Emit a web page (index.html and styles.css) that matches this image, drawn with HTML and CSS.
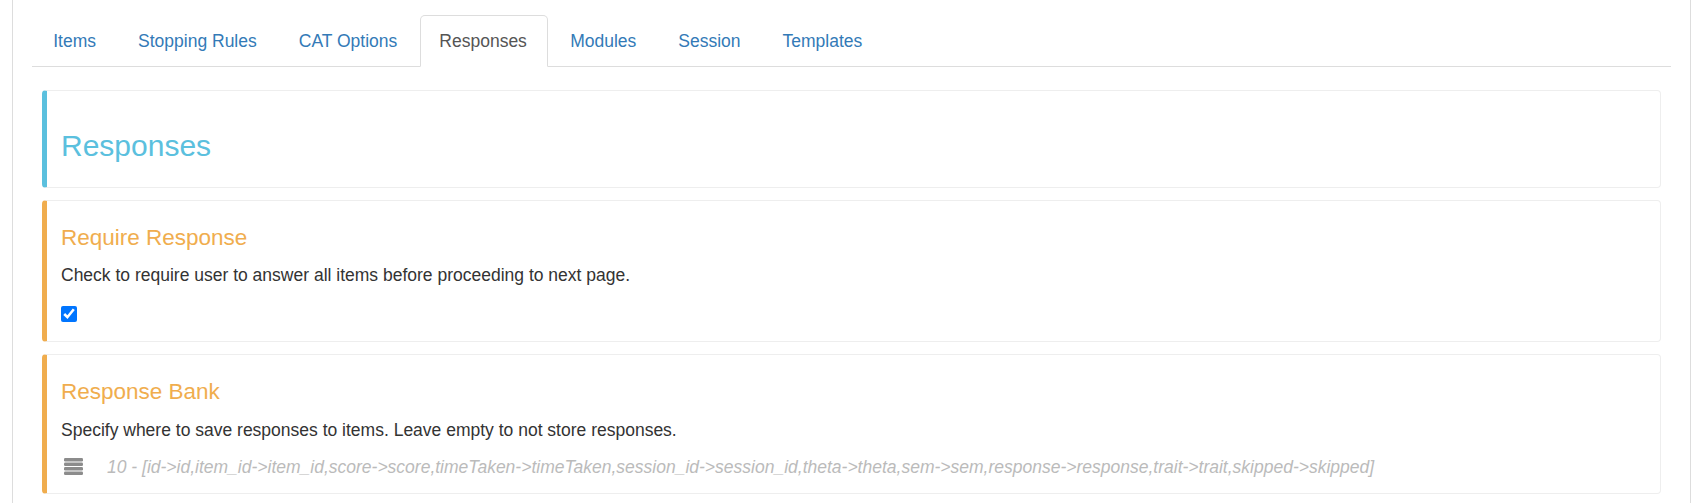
FILE: index.html
```html
<!DOCTYPE html>
<html lang="en">
<head>
<meta charset="utf-8">
<title>Responses</title>
<link rel="stylesheet" href="styles.css">
</head>
<body>
<div class="page">
  <ul class="tabs">
    <li class="tab"><a href="#">Items</a></li>
    <li class="tab"><a href="#">Stopping Rules</a></li>
    <li class="tab"><a href="#">CAT Options</a></li>
    <li class="tab active"><a href="#">Responses</a></li>
    <li class="tab"><a href="#">Modules</a></li>
    <li class="tab"><a href="#">Session</a></li>
    <li class="tab"><a href="#">Templates</a></li>
  </ul>
  <div class="tab-content">
    <div class="callout callout-info">
      <h3 class="callout-title">Responses</h3>
    </div>
    <div class="callout callout-warning">
      <h4 class="section-title">Require Response</h4>
      <p class="section-desc">Check to require user to answer all items before proceeding to next page.</p>
      <div class="check-row"><input type="checkbox" class="check" checked></div>
    </div>
    <div class="callout callout-warning">
      <h4 class="section-title">Response Bank</h4>
      <p class="section-desc">Specify where to save responses to items. Leave empty to not store responses.</p>
      <div class="bank-row">
        <svg class="bank-icon" width="19" height="17" viewBox="0 0 19 17" aria-hidden="true">
          <rect x="0" y="0" width="19" height="3.4" rx="1.2"/>
          <rect x="0" y="4.5" width="19" height="3.4" rx="1.2"/>
          <rect x="0" y="9" width="19" height="3.4" rx="1.2"/>
          <rect x="0" y="13.5" width="19" height="3.4" rx="1.2"/>
        </svg>
        <span class="bank-value">10 - [id-&gt;id,item_id-&gt;item_id,score-&gt;score,timeTaken-&gt;timeTaken,session_id-&gt;session_id,theta-&gt;theta,sem-&gt;sem,response-&gt;response,trait-&gt;trait,skipped-&gt;skipped]</span>
      </div>
    </div>
  </div>
</div>
</body>
</html>
```

FILE: styles.css
```css
html, body {
  margin: 0;
  padding: 0;
  background: #fff;
}

body {
  font-family: "Liberation Sans", Arial, Helvetica, sans-serif;
  font-size: 17.5px;
  line-height: 25px;
  color: #333;
}

.page {
  margin: 0 7px 0 12px;
  border-left: 1px solid #ddd;
  border-right: 1px solid #ddd;
  padding: 15px 19px 40px;
  min-height: 600px;
}

.tabs {
  display: flex;
  list-style: none;
  margin: 0;
  padding: 0 0 0 1.5px;
  border-bottom: 1px solid #ddd;
}

.tab {
  margin-bottom: -1px;
}

.tab a {
  display: block;
  margin-right: 2.5px;
  padding: 12.5px 18.75px;
  line-height: 25px;
  border: 1px solid transparent;
  border-radius: 5px 5px 0 0;
  color: #337ab7;
  text-decoration: none;
}

.tab.active a {
  color: #555;
  background: #fff;
  border-color: #ddd #ddd transparent;
  padding-right: 20px;
}

.tab-content {
  padding: 23px 10px 0;
}

.callout {
  border: 1px solid #eee;
  border-left: 5px solid #eee;
  border-radius: 4px;
  padding: 12.5px 12.5px 12.5px 14px;
  margin-bottom: 12.5px;
}

.callout-info {
  border-left-color: #5bc0de;
}

.callout-warning {
  border-left-color: #f0ad4e;
}

.callout-title {
  margin: 25px 0 12.5px;
  font-size: 30px;
  line-height: 33px;
  font-weight: 500;
  color: #5bc0de;
}

.section-title {
  margin: 12.5px 0 12.5px;
  font-size: 22.5px;
  line-height: 24.75px;
  font-weight: 500;
  color: #f0ad4e;
}

.section-desc {
  margin: 0 0 12.5px;
}

.check-row {
  height: 27.5px;
  display: flex;
  align-items: flex-start;
}

.check {
  width: 16px;
  height: 16px;
  margin: 5.5px 0 0 0;
}

.bank-row {
  display: flex;
  align-items: flex-start;
  height: 25px;
}

.bank-icon {
  fill: #8c8c8c;
  margin: 2.5px 0 0 3px;
  flex: none;
}

.bank-value {
  margin-left: 24px;
  font-style: italic;
  color: #bbb;
  white-space: nowrap;
}
```
